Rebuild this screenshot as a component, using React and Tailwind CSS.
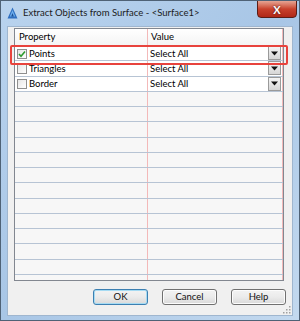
import { useState } from "react";

const rows = [
  { name: "Points", value: "Select All", checked: true },
  { name: "Triangles", value: "Select All", checked: false },
  { name: "Border", value: "Select All", checked: false },
];

const font = { fontFamily: 'Lato, "Noto Sans", sans-serif' };

const Checkbox = ({ checked }) => (
  <div className="w-[10px] h-[10px] border border-[#8f8f8f] bg-gradient-to-br from-[#e6e6e6] to-white flex items-center justify-center shrink-0">
    {checked && (
      <svg width="8" height="8" viewBox="0 0 8 8">
        <path d="M1 4 L3 6.2 L7 1.5" fill="none" stroke="#2e9b2e" strokeWidth="1.6" />
      </svg>
    )}
  </div>
);

const DropButton = () => (
  <div className="w-[13px] h-[14px] mr-[1px] border border-[#9a9a9a] bg-gradient-to-b from-[#f4f4f4] to-[#d6d6d6] flex items-center justify-center shrink-0">
    <svg width="7" height="5" viewBox="0 0 7 5">
      <path d="M0 0.5 H7 L3.5 4.5 Z" fill="#111" />
    </svg>
  </div>
);

const Button = ({ children, primary }) => (
  <button
    type="button"
    className={`w-[55px] h-[16px] rounded-[3px] text-[9.5px] leading-none text-[#111] flex items-center justify-center bg-gradient-to-b from-[#f3f3f3] via-[#ebebeb] to-[#d9d9d9] ${
      primary
        ? "border border-[#3c7fb1] shadow-[inset_0_0_0_1px_#a6dbf3]"
        : "border border-[#707070] shadow-[inset_0_0_0_1px_#fcfcfc]"
    }`}
  >
    {children}
  </button>
);

export default function App() {
  const [items] = useState(rows);
  const empty = Array.from({ length: 13 });

  return (
    <div
      className="relative w-[300px] h-[321px] flex flex-col overflow-hidden border border-[#4f6276] bg-gradient-to-br from-[#b9d3ee] via-[#a8c6e6] to-[#c3d9ef]"
      style={font}
    >
      {/* title bar */}
      <div className="h-[25px] flex items-start justify-between shrink-0">
        <div className="flex items-center gap-[5px] pl-[6px] pt-[5px]">
          <svg width="11" height="12" viewBox="0 0 11 12">
            <path d="M5.5 0.5 L10.5 11.5 H0.5 Z" fill="#2f6fc0" />
            <path d="M5.5 3 L8.2 9.5 H2.8 Z" fill="#6fb0ee" />
            <path d="M5.5 6 L6.8 9.5 H4.2 Z" fill="#1c4f95" />
          </svg>
          <span className="text-[9.5px] text-[#1b1b1b]">
            Extract Objects from Surface - &lt;Surface1&gt;
          </span>
        </div>
        <div className="mr-[2px] mt-[-1px] w-[40px] h-[18px] rounded-b-[4px] border border-[#5b1d16] bg-gradient-to-b from-[#e5a493] via-[#c8412c] to-[#b02817] flex items-center justify-center">
          <span className="text-white text-[11px] font-bold leading-none [text-shadow:0_0_2px_#401010]">
            X
          </span>
        </div>
      </div>

      {/* client area */}
      <div className="flex-1 mx-[6px] mb-[4px] bg-[#f0f0f0] border border-[#9fb6cf] flex flex-col">
        <div className="ml-[6px] mt-[1px] w-[270px] h-[253px] border border-[#828790] bg-[#f7f7f7] overflow-hidden text-[9.5px] text-black">
          {/* header */}
          <div className="h-[17px] flex border-b border-[#b7c4d4] bg-gradient-to-b from-white to-[#f4f4f4]">
            <div className="w-[133px] pl-[4px] pt-[1px] flex items-center border-r border-[#f3b9b9]">Property</div>
            <div className="flex-1 pl-[3px] pt-[1px] flex items-center border-r border-[#f3b9b9]">Value</div>
          </div>
          {items.map((r) => (
            <div key={r.name} className="h-[15.27px] flex border-b border-[#b7c4d4] bg-white">
              <div className="w-[133px] pl-[2px] pt-[1px] flex items-center gap-[2px] border-r border-[#f3b9b9]">
                <Checkbox checked={r.checked} />
                <span>{r.name}</span>
              </div>
              <div className="flex-1 pl-[2px] flex items-center justify-between border-r border-[#f3b9b9]">
                <span className="pt-[1px]">{r.value}</span>
                <DropButton />
              </div>
            </div>
          ))}
          {empty.map((_, i) => (
            <div key={i} className="h-[15.27px] flex border-b border-[#b7c4d4]">
              <div className="w-[133px] border-r border-[#f3b9b9]" />
              <div className="flex-1 border-r border-[#f3b9b9]" />
            </div>
          ))}
          <div className="h-[15.27px] flex">
            <div className="w-[133px] border-r border-[#f3b9b9]" />
            <div className="flex-1 border-r border-[#f3b9b9]" />
          </div>
        </div>

        {/* buttons */}
        <div className="flex justify-end gap-[14px] pr-[6px] mt-[8px]">
          <Button primary>OK</Button>
          <Button>Cancel</Button>
          <Button>Help</Button>
        </div>
        <div className="flex-1 flex items-end justify-end pr-[1px] pb-[1px]">
          <svg width="8" height="8" viewBox="0 0 8 8">
            <g fill="#a0a0a0">
              <rect x="6" y="0" width="1.5" height="1.5" />
              <rect x="3" y="3" width="1.5" height="1.5" />
              <rect x="6" y="3" width="1.5" height="1.5" />
              <rect x="0" y="6" width="1.5" height="1.5" />
              <rect x="3" y="6" width="1.5" height="1.5" />
              <rect x="6" y="6" width="1.5" height="1.5" />
            </g>
          </svg>
        </div>
      </div>

      {/* highlight over the first row */}
      <div className="absolute left-[9px] top-[44px] w-[278px] h-[20px] border-2 border-[#e8433d] rounded-[2px] pointer-events-none" />
    </div>
  );
}
